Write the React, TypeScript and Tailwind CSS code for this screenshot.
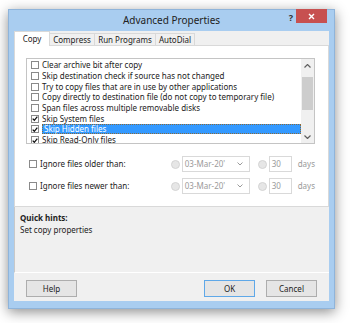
import { FC } from 'react';

const font = { fontFamily: '"Noto Sans", "Open Sans", sans-serif' };

const Check: FC = () => (
  <svg width="7" height="7" viewBox="0 0 7 7">
    <path d="M0.8 3.6 L2.7 5.6 L6.2 1.2" stroke="#111" strokeWidth="1.5" fill="none" />
  </svg>
);

const Box: FC<{ checked?: boolean }> = ({ checked }) => (
  <span className="flex h-[8px] w-[8px] shrink-0 items-center justify-center border border-[#8a8a8a] bg-white">
    {checked && <Check />}
  </span>
);

const items = [
  { label: 'Clear archive bit after copy' },
  { label: 'Skip destination check if source has not changed' },
  { label: 'Try to copy files that are in use by other applications' },
  { label: 'Copy directly to destination file (do not copy to temporary file)' },
  { label: 'Span files across multiple removable disks' },
  { label: 'Skip System files', checked: true },
  { label: 'Skip Hidden files', checked: true, selected: true },
  { label: 'Skip Read-Only files', checked: true },
];

const Radio: FC = () => (
  <span className="h-[9px] w-[9px] shrink-0 rounded-full border border-[#d4d4d4] bg-[#e6e6e6]" />
);

const DateRow: FC<{ label: string }> = ({ label }) => (
  <div className="flex h-[16px] items-center">
    <div className="flex w-[145px] items-center gap-[3px] pl-[3px]">
      <Box />
      <span className="text-[8px] text-[#222]">{label}</span>
    </div>
    <Radio />
    <div className="ml-[2px] flex h-[16px] w-[68px] items-center justify-between border border-[#d9d9d9] bg-white pl-[2px] pr-[6px] text-[8px] text-[#9a9a9a]">
      <span className="whitespace-nowrap">03-Mar-20'</span>
      <svg width="6" height="4" viewBox="0 0 6 4">
        <path d="M0.5 0.5 L3 3 L5.5 0.5" stroke="#9a9a9a" fill="none" />
      </svg>
    </div>
    <span className="ml-[8px] flex">
      <Radio />
    </span>
    <div className="ml-[2px] flex h-[16px] w-[23px] items-center border border-[#d9d9d9] bg-white pl-[2px] text-[8px] text-[#9a9a9a]">
      30
    </div>
    <span className="ml-[6px] text-[8px] text-[#9a9a9a]">days</span>
  </div>
);

const Button: FC<{ label: string; primary?: boolean }> = ({ label, primary }) => (
  <div
    className={`flex h-[17px] w-[51px] items-center justify-center border bg-[#e5e5e5] text-[8px] text-[#222] ${
      primary ? 'border-[#5fa8e8]' : 'border-[#adadad]'
    }`}
  >
    {label}
  </div>
);

export default function App() {
  return (
    <div className="h-[323px] w-[350px] overflow-hidden bg-white" style={font}>
      <div className="ml-[8px] mt-[9px] flex h-[300px] w-[327px] flex-col border border-[#8fb4da] bg-[#a9cdf0] px-[5px] pb-[7px] shadow-[0_3px_12px_rgba(0,0,0,0.45)]">
        {/* title bar */}
        <div className="relative flex h-[21px] shrink-0 items-center justify-center">
          <span className="text-[10px] text-[#222]">Advanced Properties</span>
          <span className="absolute right-[36px] top-[1px] text-[9px] font-bold text-[#333]">?</span>
          <div className="absolute right-[2px] top-[-1px] flex h-[14px] w-[31px] items-center justify-center bg-[#c75050]">
            <svg width="7" height="7" viewBox="0 0 7 7">
              <path d="M1 1 L6 6 M6 1 L1 6" stroke="#fff" strokeWidth="1.4" />
            </svg>
          </div>
        </div>

        {/* client */}
        <div className="flex flex-1 flex-col bg-[#f0f0f0]">
          {/* tabs */}
          <div className="flex h-[15px] shrink-0 items-end whitespace-nowrap text-[8px] text-[#222]">
            <div className="relative z-10 flex h-[15px] w-[36px] items-center justify-center border border-b-0 border-[#d9d9d9] bg-white pb-[1px]">
              Copy
            </div>
            <div className="flex h-[13px] w-[45px] items-center justify-center border border-l-0 border-[#d9d9d9] bg-[#f0f0f0]">
              Compress
            </div>
            <div className="flex h-[13px] w-[61px] items-center justify-center border border-l-0 border-[#d9d9d9] bg-[#f0f0f0]">
              Run Programs
            </div>
            <div className="flex h-[13px] w-[39px] items-center justify-center border border-l-0 border-[#d9d9d9] bg-[#f0f0f0]">
              AutoDial
            </div>
          </div>

          {/* panel */}
          <div className="-mt-px h-[162px] shrink-0 border border-[#d9d9d9] bg-white pl-[11px] pr-[13px] pt-[12px]">
            <div className="flex h-[86px] border border-[#c4c4c4]">
              <div className="flex-1 overflow-hidden pl-[4px] pt-[1px]">
                {items.map((it) => (
                  <div key={it.label} className="flex h-[10.7px] items-center gap-[3px] whitespace-nowrap">
                    <Box checked={it.checked} />
                    <span
                      className={`flex h-[10px] flex-1 items-center text-[8px] leading-none ${
                        it.selected
                          ? 'border border-dotted border-[#8a6a3a] bg-[#3399ff] pl-[1px] text-white'
                          : 'text-[#222]'
                      }`}
                    >
                      {it.label}
                    </span>
                  </div>
                ))}
              </div>
              <div className="flex w-[13px] shrink-0 flex-col items-center bg-[#f0f0f0]">
                <div className="flex h-[13px] items-center">
                  <svg width="7" height="4" viewBox="0 0 7 4">
                    <path d="M0.5 3.5 L3.5 0.5 L6.5 3.5" stroke="#606060" strokeWidth="1.2" fill="none" />
                  </svg>
                </div>
                <div className="mt-[5px] h-[33px] w-[11px] bg-[#cdcdcd]" />
                <div className="flex-1" />
                <div className="flex h-[12px] items-center">
                  <svg width="7" height="4" viewBox="0 0 7 4">
                    <path d="M0.5 0.5 L3.5 3.5 L6.5 0.5" stroke="#606060" strokeWidth="1.2" fill="none" />
                  </svg>
                </div>
              </div>
            </div>

            <div className="mt-[12px] flex flex-col gap-[6px]">
              <DateRow label="Ignore files older than:" />
              <DateRow label="Ignore files newer than:" />
            </div>
          </div>

          {/* hints */}
          <div className="h-[66px] shrink-0 border-b border-l border-b-white border-l-[#c8c8c8] pl-[5px] pt-[5px] text-[8px] leading-[12px] text-[#222]">
            <div className="font-bold">Quick hints:</div>
            <div>Set copy properties</div>
          </div>

          {/* buttons */}
          <div className="flex flex-1 items-center px-[12px] pt-[3px]">
            <Button label="Help" />
            <div className="flex-1" />
            <Button label="OK" primary />
            <div className="w-[11px]" />
            <Button label="Cancel" />
          </div>
        </div>
      </div>
    </div>
  );
}
